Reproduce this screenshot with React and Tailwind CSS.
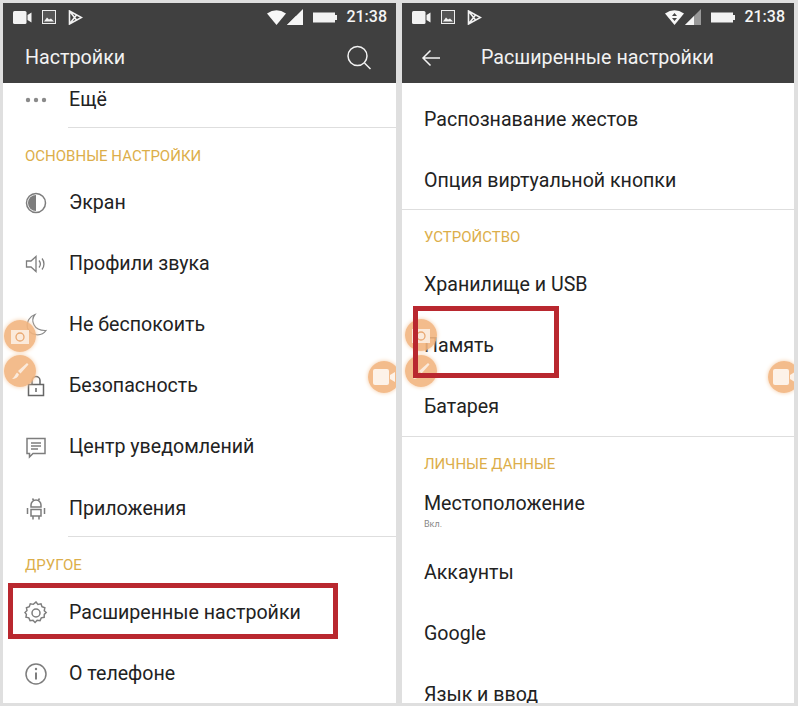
const Status = ({ wifiArrows }) => (
  <div className="flex h-[27px] items-center pl-[10px] pr-[9px] pt-[1px] text-white">
    <svg width="19" height="13" viewBox="0 0 19 13" fill="#f2f2f2"><rect x="0" y="0" width="13.5" height="13" rx="1.5" /><path d="M14.5 4l4-2.5v10l-4-2.5z" /></svg>
    <svg className="ml-[10px]" width="14" height="14" viewBox="0 0 14 14"><rect x="0.5" y="0.5" width="13" height="13" fill="#555" stroke="#eee" /><path d="M2 11.5l3-4 2 2 2-1 3 3z" fill="#f2f2f2" /></svg>
    <svg className="ml-[12px]" width="15" height="15" viewBox="0 0 15 15" fill="none" stroke="#f2f2f2" strokeWidth="1.6"><path d="M1.5 1v13l12-6.5zM1.5 1l7 9M1.5 14l7-9" /></svg>
    <div className="ml-auto flex items-center">
      <svg width="19" height="15" viewBox="0 0 19 15">
        <path d="M0 3.5Q9.5-3 19 3.5L9.5 15z" fill="#f7f7f7" />
        {wifiArrows && <path d="M9.5 3l2.5 3h-5zM9.5 11l2.5-3h-5z" fill="#444" />}
      </svg>
      <svg className="ml-[1px]" width="16" height="16" viewBox="0 0 16 16"><path d="M16 0v16H0z" fill={wifiArrows ? '#999' : '#f5f5f5'} /><path d="M9 7v9H0z" fill="#f5f5f5" /></svg>
      <svg className="ml-[10px]" width="24" height="11" viewBox="0 0 24 11"><rect x="0" y="0.5" width="22" height="10" fill="#f2f2f2" /><rect x="22" y="3" width="2" height="5" fill="#f2f2f2" /></svg>
      <span className="ml-[9px] text-[16px] font-medium leading-none text-[#f5f5f5]">21:38</span>
    </div>
  </div>
)

const Row = ({ icon, children, sub }) => (
  <div className="relative flex h-[61.2px] shrink-0 items-center">
    {icon && <div className="flex w-[66px] justify-center">{icon}</div>}
    <div className={icon ? '' : 'pl-[22px]'}>
      <div className="text-[19.6px] leading-[24px] text-[#222]">{children}</div>
      {sub && <div className="mb-[2px] mt-[3px] text-[9px] leading-[10px] text-[#888]">{sub}</div>}
    </div>
  </div>
)

const Header = ({ children, className }) => (
  <div className={`flex shrink-0 items-end pl-[22px] text-[15px] leading-[18px] text-[#dcae4a] ${className}`}>{children}</div>
)

const Line = ({ className }) => <div className={`h-px shrink-0 bg-[#dedede] ${className}`} />

const ico = { width: 24, height: 24, viewBox: '0 0 24 24', fill: 'none', stroke: '#7d7d7d', strokeWidth: 1.5 }

const ScreenIcon = () => <svg {...ico}><circle cx="12" cy="12" r="9.5" /><path d="M12 4a8 8 0 0 0 0 16z" fill="#7d7d7d" stroke="none" /></svg>
const SoundIcon = () => <svg {...ico}><path d="M2.5 9h4.5l5-4.5v15L7 15H2.5zM15 8.5c1.6 2 1.6 5 0 7M18 6.5c2.6 3 2.6 8 0 11" strokeWidth="1.3" /></svg>
const MoonIcon = () => <svg {...ico} stroke="#8a8a8a"><path d="M11 1.5C6.5 7 9 18 22 17.5 17.500 24 6 23 3.500 15 2 9 6 3 11 1.500z" strokeWidth="1.2" /></svg>
const LockIcon = () => <svg {...ico} stroke="#666"><rect x="4.500" y="10.500" width="15" height="11" /><path d="M8 10.500V6.500a4 4 0 0 1 8 0v4M12 14v4" /></svg>
const ChatIcon = () => <svg {...ico}><path d="M3 3.500h18v15H9l-3.500 3.500v-3.500H3z" /><path d="M7 8h10M7 11h10M7 14h7" strokeWidth="1.300" /></svg>
const AndroidIcon = () => <svg {...ico}><path d="M7 10V8a5 5 0 0 1 10 0v2zM7 12.500h10V19H7zM9 19v3.500M15 19v3.500M3.500 11v6M20.500 11v6M8.500 1.500l1.500 2.500M15.500 1.500L14 4" /></svg>
const GearIcon = () => <svg {...ico}><path d="M12 1.500l2 2.500 3.200-.6 1 3 3 1.100-.6 3.100 2 1.900-2 2-.1 3-3 .6-1.300 2.900-3-.5-2.200 2.400-2.200-2.400-3 .5-1.300-2.900-3-.6L2 14.500 0.500 12.500 2.600 10.500 2 7.500l3-1.100 1-3 3.200.6z" transform="translate(0.500 -0.500) scale(0.96)" /><circle cx="12" cy="12" r="4" /></svg>
const InfoIcon = () => <svg {...ico}><circle cx="12" cy="12" r="10" /><path d="M12 10.500v7" strokeWidth="2" /><circle cx="12" cy="7" r="1.200" fill="#7d7d7d" stroke="none" /></svg>
const DotsIcon = () => <svg width="22" height="6" viewBox="0 0 22 6" fill="#8a8a8a"><circle cx="3" cy="3" r="2.200" /><circle cx="11" cy="3" r="2.200" /><circle cx="19" cy="3" r="2.200" /></svg>

const Bubble = ({ className, children }) => (
  <div className={`absolute flex h-[32px] w-[32px] items-center justify-center rounded-full bg-[#f2b57f]/90 shadow-[0_0_4px_#f5cda8] ${className}`}>{children}</div>
)
const CameraGlyph = () => <svg width="20" height="18" viewBox="0 0 20 18" fill="#fbeadb"><path d="M1 3h18v14H1z" /><circle cx="10" cy="10" r="4" fill="none" stroke="#e9a871" strokeWidth="1.300" /></svg>
const BrushGlyph = () => <svg width="20" height="20" viewBox="0 0 20 20" fill="#fbeadb"><path d="M17 2L8 10l2.500 2.500L18.500 3.500zM7 11.500l2 2c-1 3-4 4.500-7 4.500 2-1.500 3-4 5-6.500z" /></svg>
const VideoGlyph = () => <svg width="22" height="16" viewBox="0 0 22 16" fill="#fdf2e8"><rect x="0" y="0" width="16" height="16" rx="2" /><path d="M17 6l5-3v10l-5-3z" /></svg>

const App = () => {
  return (
    <div className="flex h-[706px] w-[798px] gap-[6px] overflow-hidden bg-[#dfdfdf] pb-[3px] pl-[3px] pr-[4px] pt-[3px] font-['Roboto',sans-serif]">
      <div className="relative flex w-[393px] flex-col overflow-hidden bg-white">
        <div className="h-[80px] shrink-0 bg-[#404040]">
          <Status />
          <div className="flex h-[53px] items-center justify-between pl-[22px] pr-[24px] pt-[3px]">
            <span className="text-[19.7px] text-[#f2f2f2]">Настройки</span>
            <svg width="26" height="26" viewBox="0 0 26 26" fill="none" stroke="#f2f2f2" strokeWidth="1.500"><circle cx="11.500" cy="11" r="9.500" /><path d="M18.500 18l6 6" /></svg>
          </div>
        </div>
        <div className="relative flex h-[44px] shrink-0 items-start pt-[5px]">
          <div className="flex h-[24px] w-[66px] items-center justify-center"><DotsIcon /></div>
          <div className="text-[19.6px] leading-[24px] text-[#222]">Ещё</div>
        </div>
        <Line className="ml-[65px]" />
        <Header className="h-[44px] pb-[7px]">ОСНОВНЫЕ НАСТРОЙКИ</Header>
        <Row icon={<ScreenIcon />}>Экран</Row>
        <Row icon={<SoundIcon />}>Профили звука</Row>
        <Row icon={<MoonIcon />}>Не беспокоить</Row>
        <Row icon={<LockIcon />}>Безопасность</Row>
        <Row icon={<ChatIcon />}>Центр уведомлений</Row>
        <Row icon={<AndroidIcon />}>Приложения</Row>
        <Line className="-mt-[3px] ml-[65px]" />
        <Header className="h-[45px] pb-[8px]">ДРУГОЕ</Header>
        <Row icon={<GearIcon />}>Расширенные настройки</Row>
        <Row icon={<InfoIcon />}>О телефоне</Row>
        <Bubble className="left-[1px] top-[317px]"><CameraGlyph /></Bubble>
        <Bubble className="left-[1px] top-[352px]"><BrushGlyph /></Bubble>
        <Bubble className="left-[365px] top-[358px]"><VideoGlyph /></Bubble>
        <div className="absolute left-[5px] top-[580px] h-[56px] w-[330px] border-[5px] border-[#b9282f]" />
      </div>

      <div className="relative flex w-[392px] flex-col overflow-hidden bg-white">
        <div className="h-[80px] shrink-0 bg-[#404040]">
          <Status wifiArrows />
          <div className="flex h-[53px] items-center pl-[19px] pt-[3px]">
            <svg width="20" height="18" viewBox="0 0 20 18" fill="none" stroke="#f2f2f2" strokeWidth="1.500"><path d="M19 9H2M9.500 1.500L2 9l7.500 7.500" /></svg>
            <span className="ml-[40px] text-[19.7px] text-[#f2f2f2]">Расширенные настройки</span>
          </div>
        </div>
        <div className="h-[6px] shrink-0" />
        <Row>Распознавание жестов</Row>
        <Row>Опция виртуальной кнопки</Row>
        <Line className="-mt-[2px]" />
        <Header className="h-[44px] pb-[8px]">УСТРОЙСТВО</Header>
        <Row>Хранилище и USB</Row>
        <Row>Память</Row>
        <Row>Батарея</Row>
        <Line className="-mt-[2px]" />
        <Header className="h-[44px] pb-[8px]">ЛИЧНЫЕ ДАННЫЕ</Header>
        <Row sub="Вкл.">Местоположение</Row>
        <Row>Аккаунты</Row>
        <Row>Google</Row>
        <Row>Язык и ввод</Row>
        <Bubble className="left-[3px] top-[316px]"><CameraGlyph /></Bubble>
        <Bubble className="left-[3px] top-[352px]"><BrushGlyph /></Bubble>
        <Bubble className="left-[366px] top-[358px]"><VideoGlyph /></Bubble>
        <div className="absolute left-[11px] top-[303px] h-[72px] w-[146px] border-[5px] border-[#b9282f]" />
      </div>
    </div>
  )
}

export default App
